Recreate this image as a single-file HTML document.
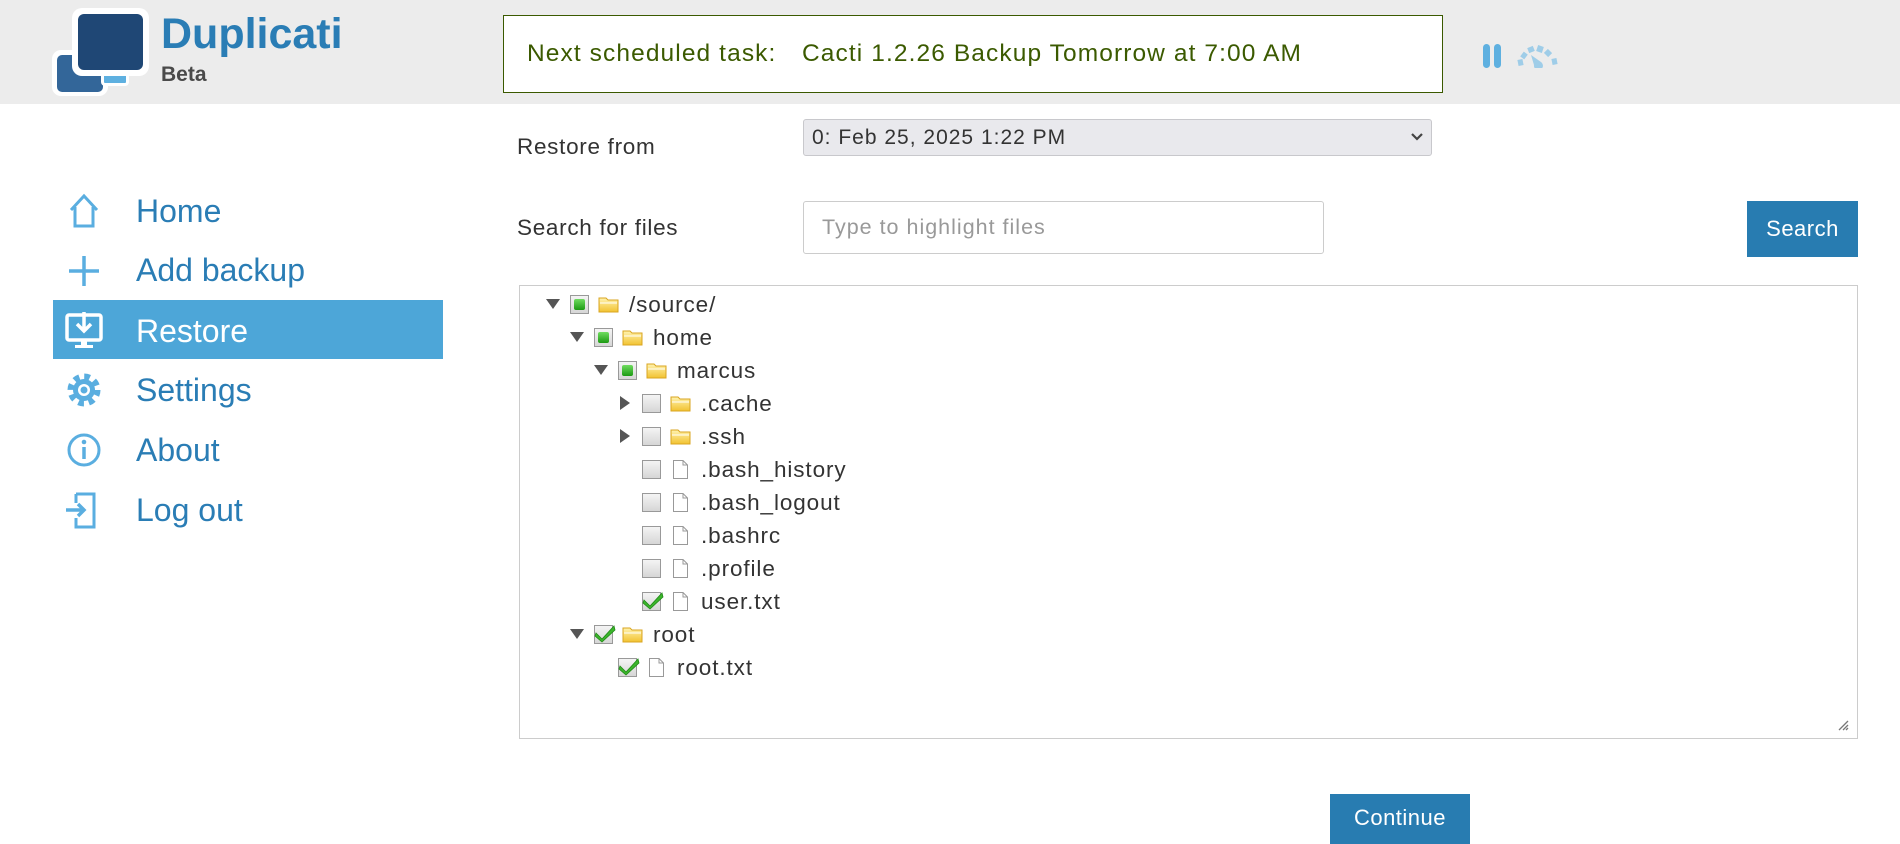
<!DOCTYPE html>
<html><head><meta charset="utf-8"><style>
*{box-sizing:border-box;margin:0;padding:0}
body{width:1900px;height:840px;overflow:hidden;background:#fff;font-family:"Liberation Sans",sans-serif;position:relative}
.a{position:absolute}
.hdr{left:0;top:0;width:1900px;height:104px;background:#ececec}
.nav{left:136px;font-size:32px;color:#2a7db5;line-height:40px}
.ic{left:64px;width:40px;height:40px}
.row{position:absolute;height:33px;font-size:22.5px;color:#333;line-height:33px;letter-spacing:0.9px}
.arr{position:absolute;top:11px;width:0;height:0}
.down{border-left:7px solid transparent;border-right:7px solid transparent;border-top:10px solid #555}
.right{border-top:7px solid transparent;border-bottom:7px solid transparent;border-left:10px solid #555;top:9px}
.cb{position:absolute;top:7px;width:19px;height:19px;border:1px solid #999;background:linear-gradient(#f4f4f4,#d6d6d6)}
.cb.p::after{content:"";position:absolute;left:3px;top:3px;width:11px;height:11px;background:linear-gradient(#6fdc5f,#1c9a12);border-radius:2px}
.fo{position:absolute;top:8px;width:21px;height:17px}
.fi{position:absolute;top:6px;width:17px;height:21px}
.lbl{position:absolute;top:0;white-space:nowrap}
</style></head><body>
<div class="a hdr"></div>
<!-- logo -->
<div class="a" style="left:52px;top:50px;width:56px;height:46px;background:#fff;border-radius:9px"></div>
<div class="a" style="left:57px;top:55px;width:46px;height:37px;background:#336699;border-radius:5px"></div>
<div class="a" style="left:101px;top:62px;width:28px;height:24px;background:#5eb0e0;border-radius:4px;border:3px solid #fff"></div>
<div class="a" style="left:72px;top:8px;width:77px;height:68px;background:#fff;border-radius:10px"></div>
<div class="a" style="left:78px;top:14px;width:65px;height:56px;background:#1f4775;border-radius:6px"></div>
<div class="a" style="left:161px;top:6px;font-size:43px;font-weight:bold;color:#2a7db5;line-height:56px">Duplicati</div>
<div class="a" style="left:161px;top:63px;font-size:21px;font-weight:bold;color:#4a4a4a">Beta</div>
<!-- notice -->
<div class="a" style="left:503px;top:15px;width:940px;height:78px;background:#fff;border:1px solid #3b5a00"></div>
<div class="a" style="left:527px;top:40px;font-size:24.5px;letter-spacing:1.1px;color:#3b5a00;white-space:nowrap">Next scheduled task:</div>
<div class="a" style="left:802px;top:40px;font-size:24.5px;letter-spacing:1.1px;color:#3b5a00;white-space:nowrap">Cacti 1.2.26 Backup Tomorrow at 7:00 AM</div>
<div class="a" style="left:1483px;top:44px;width:7px;height:24px;background:#5eb0e0;border-radius:4px"></div>
<div class="a" style="left:1494px;top:44px;width:7px;height:24px;background:#5eb0e0;border-radius:4px"></div>
<svg class="a" style="left:1516px;top:42px" width="44" height="26" viewBox="0 0 44 26"><g stroke="#9fcde8" stroke-width="6" fill="none"><path d="M2 21 L7 20"/><path d="M6 12 L10 15"/><path d="M14 5 L16 10"/><path d="M25 4 L23 10"/><path d="M34 9 L30 13"/><path d="M41 19 L36 20"/></g><path d="M15 13 L25 20 A4.5 4.5 0 1 1 18 23 Z" fill="#9fcde8"/></svg>
<!-- sidebar -->
<div class="a" style="left:53px;top:300px;width:390px;height:59px;background:#4da6d8"></div>
<svg class="a ic" style="top:191px" viewBox="0 0 40 40"><path d="M7 19 L20 5 L33 19 M11 16 V35 H29 V16" fill="none" stroke="#5aaee0" stroke-width="3"/></svg>
<div class="a nav" style="top:191px">Home</div>
<svg class="a ic" style="top:250px" viewBox="0 0 40 40"><path d="M20 6 V36 M5 21 H35" stroke="#5aaee0" stroke-width="3.5"/></svg>
<div class="a nav" style="top:250px">Add backup</div>
<svg class="a ic" style="top:310px" viewBox="0 0 40 40"><rect x="3" y="5" width="34" height="25" rx="2" fill="none" stroke="#fff" stroke-width="3.5"/><path d="M20 2 V20 M13 14 L20 21 L27 14" fill="none" stroke="#fff" stroke-width="3.5"/><path d="M17 30 V35 H11 V38 H29 V35 H23 V30" fill="#fff"/></svg>
<div class="a nav" style="top:311px;color:#fff">Restore</div>
<svg class="a ic" style="top:370px" viewBox="0 0 40 40"><circle cx="20" cy="20" r="12" fill="none" stroke="#5aaee0" stroke-width="9" stroke-dasharray="5 4.4"/><circle cx="20" cy="20" r="11" fill="#5aaee0"/><circle cx="20" cy="20" r="6" fill="#fff"/><circle cx="20" cy="20" r="3.5" fill="#5aaee0"/></svg>
<div class="a nav" style="top:370px">Settings</div>
<svg class="a ic" style="top:430px" viewBox="0 0 40 40"><circle cx="20" cy="20" r="15" fill="none" stroke="#5aaee0" stroke-width="3"/><circle cx="20" cy="12" r="2.3" fill="#5aaee0"/><path d="M20 17 V29" stroke="#5aaee0" stroke-width="3.5"/></svg>
<div class="a nav" style="top:430px">About</div>
<svg class="a ic" style="top:490px" viewBox="0 0 40 40"><path d="M12 4 H30 V37 H12 V28 M12 13 V4" fill="none" stroke="#5aaee0" stroke-width="3"/><path d="M2 20 H20 M14 14 L20 20 L14 26" fill="none" stroke="#5aaee0" stroke-width="3.5"/></svg>
<div class="a nav" style="top:490px">Log out</div>
<!-- main -->
<div class="a" style="left:517px;top:134px;font-size:22.5px;letter-spacing:0.7px;color:#333">Restore from</div>
<div class="a" style="left:803px;top:119px;width:629px;height:37px;background:#e9e9ed;border:1px solid #c8c8cc;border-radius:3px;font-size:21px;letter-spacing:1px;color:#333;line-height:35px;padding-left:8px">0: Feb 25, 2025 1:22 PM</div>
<svg class="a" style="left:1410px;top:131px" width="14" height="12"><path d="M2 3 L7 8 L12 3" fill="none" stroke="#444" stroke-width="2.2"/></svg>
<div class="a" style="left:517px;top:215px;font-size:22.5px;letter-spacing:0.7px;color:#333">Search for files</div>
<div class="a" style="left:803px;top:201px;width:521px;height:53px;border:1px solid #ccc;border-radius:3px;font-size:21.5px;letter-spacing:1px;color:#999;line-height:51px;padding-left:18px">Type to highlight files</div>
<div class="a" style="left:1747px;top:201px;width:111px;height:56px;background:#287cb1;color:#fff;font-size:22px;letter-spacing:0.5px;line-height:56px;text-align:center">Search</div>
<div class="a" style="left:519px;top:285px;width:1339px;height:454px;border:1px solid #ccc"></div>
<svg class="a" style="left:1837px;top:719px" width="12" height="12"><path d="M11 2 L2 11 M11 6 L6 11 M11 9 L9 11" stroke="#777" stroke-width="1.3"/></svg>
<div id="tree"></div>
<div class="a" style="left:1330px;top:794px;width:140px;height:50px;background:#287cb1;color:#fff;font-size:22px;letter-spacing:0.5px;line-height:48px;text-align:center">Continue</div>
<script>
var rows=[[0,'d','p','f','/source/'],[1,'d','p','f','home'],[2,'d','p','f','marcus'],[3,'r','e','f','.cache'],[3,'r','e','f','.ssh'],[3,'','e','x','.bash_history'],[3,'','e','x','.bash_logout'],[3,'','e','x','.bashrc'],[3,'','e','x','.profile'],[3,'','c','x','user.txt'],[1,'d','c','f','root'],[2,'','c','x','root.txt']];
var h='';
var fold='<svg class="fo" viewBox="0 0 21 17"><defs><linearGradient id="g" x1="0" y1="0" x2="0" y2="1"><stop offset="0" stop-color="#fff3b0"/><stop offset="1" stop-color="#f2c230"/></linearGradient></defs><path d="M1 2 H8 L10 4 H20 V16 H1 Z" fill="url(#g)" stroke="#d9a520"/><path d="M2 7 H19" stroke="#fff" stroke-width="1"/></svg>';
var file='<svg class="fi" viewBox="0 0 17 21"><path d="M1.5 1.5 H11 L15.5 6 V19.5 H1.5 Z M11 1.5 V6 H15.5" fill="#fff" stroke="#999"/></svg>';
var chk='<svg style="position:absolute;left:-1px;top:-4px" width="22" height="22" viewBox="0 0 22 22"><path d="M2 11 L8 17 L20 4 L21 8 L8 20 L1 14 Z" fill="#3cb52c" stroke="#1f8a15" stroke-width="0.8"/></svg>';
rows.forEach(function(r,i){
 var x=548+r[0]*24,y=288+i*33;
 h+='<div class="row" style="left:'+x+'px;top:'+y+'px;width:400px">';
 if(r[1]=='d')h+='<div class="arr down" style="left:-2px"></div>';
 if(r[1]=='r')h+='<div class="arr right" style="left:0"></div>';
 h+='<div class="cb '+(r[2]=='p'?'p':'')+'" style="left:22px">'+(r[2]=='c'?chk:'')+'</div>';
 h+=(r[3]=='f'?fold.replace('class="fo"','class="fo" style="left:50px"'):file.replace('class="fi"','class="fi" style="left:52px"'));
 h+='<div class="lbl" style="left:81px">'+r[4]+'</div></div>';
});
document.getElementById('tree').innerHTML=h;
</script>
</body></html>
